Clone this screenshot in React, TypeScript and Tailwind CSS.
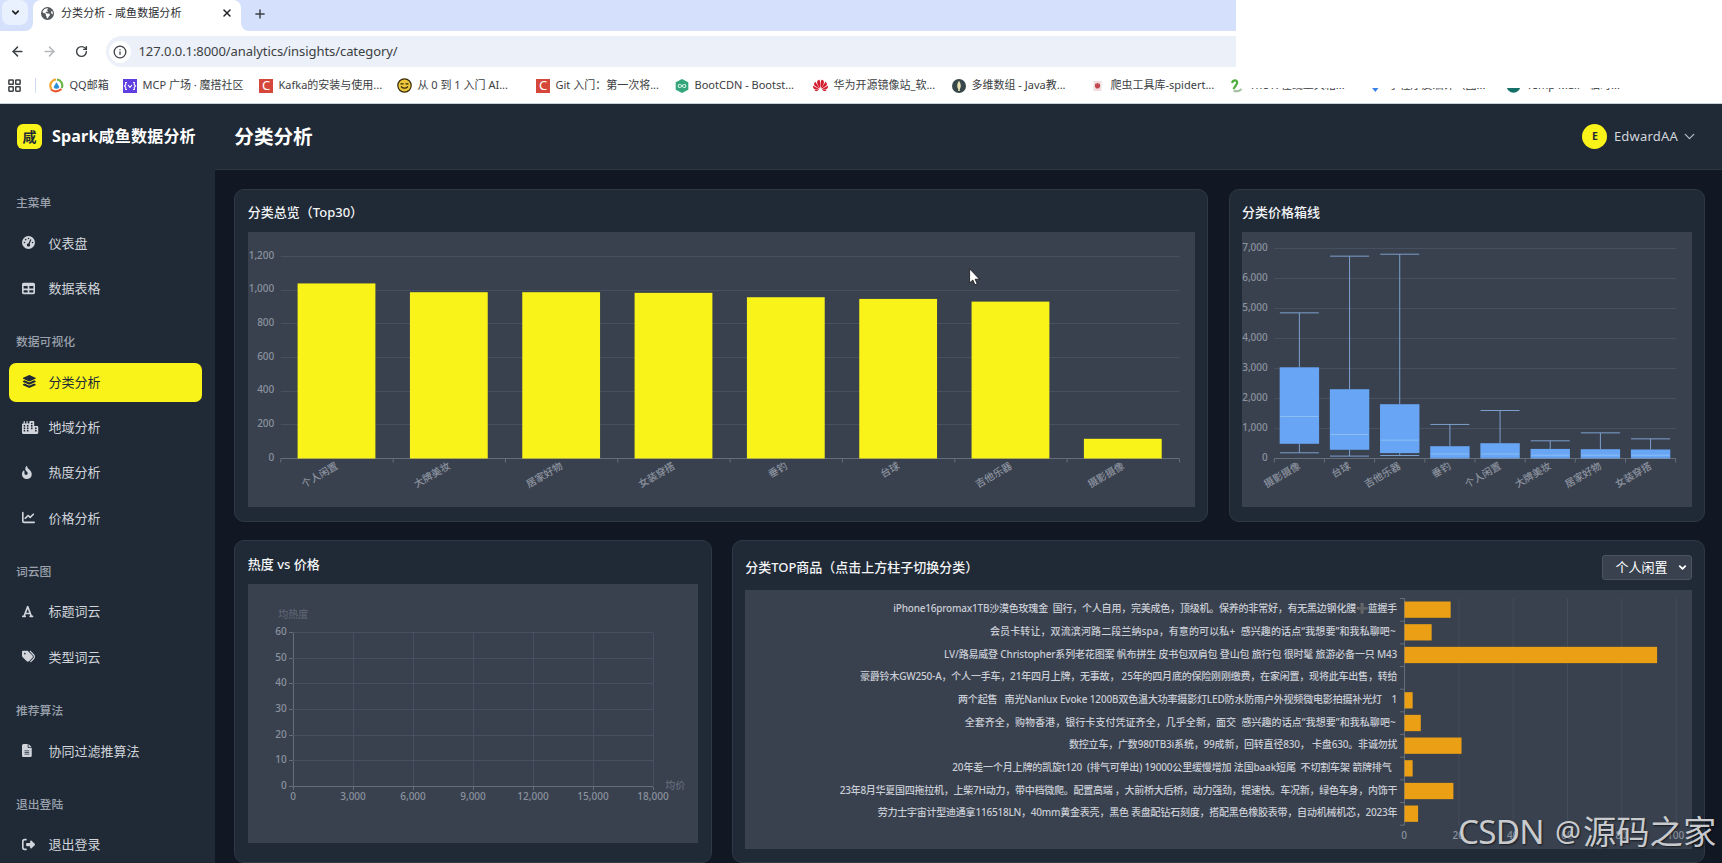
import type { ReactNode } from "react"
import { ArrowLeft, ArrowRight, ChevronDown, Info, LayoutGrid, Plus, RotateCw, X } from "lucide-react"
import {
  FaChartLine,
  FaCity,
  FaEarthAmericas,
  FaFileLines,
  FaFireFlameCurved,
  FaFont,
  FaGaugeHigh,
  FaLayerGroup,
  FaRightFromBracket,
  FaTable,
  FaTags,
} from "react-icons/fa6"
import { SiHuawei } from "react-icons/si"

const AXIS = "#8b929e"
const GRID = "#475060"
const LINE = "#656d7b"

const sections = [
  {
    title: "主菜单",
    items: [
      { label: "仪表盘", icon: FaGaugeHigh },
      { label: "数据表格", icon: FaTable },
    ],
  },
  {
    title: "数据可视化",
    items: [
      { label: "分类分析", icon: FaLayerGroup, active: true },
      { label: "地域分析", icon: FaCity },
      { label: "热度分析", icon: FaFireFlameCurved },
      { label: "价格分析", icon: FaChartLine },
    ],
  },
  {
    title: "词云图",
    items: [
      { label: "标题词云", icon: FaFont },
      { label: "类型词云", icon: FaTags },
    ],
  },
  { title: "推荐算法", items: [{ label: "协同过滤推算法", icon: FaFileLines }] },
  { title: "退出登陆", items: [{ label: "退出登录", icon: FaRightFromBracket }] },
]

const overview = [
  { name: "个人闲置", value: 1040 },
  { name: "大牌美妆", value: 988 },
  { name: "居家好物", value: 988 },
  { name: "女装穿搭", value: 984 },
  { name: "垂钓", value: 958 },
  { name: "台球", value: 948 },
  { name: "吉他乐器", value: 932 },
  { name: "摄影摄像", value: 117 },
]

// [low, q1, median, q3, high]
const boxes = [
  { name: "摄影摄像", v: [190, 490, 1400, 3040, 4855] },
  { name: "台球", v: [80, 290, 800, 2310, 6745] },
  { name: "吉他乐器", v: [100, 180, 610, 1810, 6810] },
  { name: "垂钓", v: [10, 20, 150, 410, 1135] },
  { name: "个人闲置", v: [10, 20, 150, 510, 1600] },
  { name: "大牌美妆", v: [10, 20, 110, 320, 590] },
  { name: "居家好物", v: [10, 20, 110, 310, 855] },
  { name: "女装穿搭", v: [10, 20, 110, 300, 655] },
]

// from / to are the horizontal extent of each label inside the chart
const topItems = [
  { name: "iPhone16promax1TB沙漠色玫瑰金  国行，个人自用，完美成色，顶级机。保养的非常好，有无黑边钢化膜➕蓝握手", value: 17, from: 148.3, to: 652.3 },
  { name: "会员卡转让，双流滨河路二段兰纳spa，有意的可以私+  感兴趣的话点“我想要”和我私聊吧~", value: 10, from: 245, to: 650.7 },
  { name: "LV/路易威登 Christopher系列老花图案 帆布拼生 皮书包双肩包 登山包 旅行包 很时髦 旅游必备一只 M43", value: 93, from: 199, to: 652.3 },
  { name: "豪爵铃木GW250-A，个人一手车，21年四月上牌，无事故， 25年的四月底的保险刚刚缴费，在家闲置，现将此车出售，转给", value: 0, from: 115, to: 652.5 },
  { name: "两个起售   南光Nanlux Evoke 1200B双色温大功率摄影灯LED防水防雨户外视频微电影拍摄补光灯    1", value: 3, from: 213, to: 652.3 },
  { name: "全套齐全，购物香港，银行卡支付凭证齐全，几乎全新，面交  感兴趣的话点“我想要”和我私聊吧~", value: 6, from: 219.7, to: 650.7 },
  { name: "数控立车，广数980TB3i系统，99成新，回转直径830， 卡盘630。非诚勿扰", value: 21, from: 324, to: 652.5 },
  { name: "20年差一个月上牌的凯旋t120  (排气可单出) 19000公里缓慢增加 法国baak短尾  不切割车架 箭牌排气", value: 3, from: 207.3, to: 646.7 },
  { name: "23年8月华夏国四拖拉机，上柴7H动力，带中档微爬。配置高端 ，大前桥大后桥，动力强劲，提速快。车况新，绿色车身，内饰干", value: 18, from: 94.7, to: 652.5 },
  { name: "劳力士宇宙计型迪通拿116518LN，40mm黄金表壳，黑色 表盘配钻石刻度，搭配黑色橡胶表带，自动机械机芯，2023年", value: 5, from: 132.7, to: 652.5 },
]

function CIcon() {
  return <span className="flex size-[14px] items-center justify-center bg-[#d5473b] text-[13px] leading-none text-white">C</span>
}

const bookmarks: { label: string; icon: ReactNode }[] = [
  {
    label: "QQ邮箱",
    icon: (
      <svg className="size-[15px]" viewBox="0 0 15 15">
        <path d="M7 1.5A6 6 0 0 0 2.5 11" fill="none" stroke="#f2a52c" strokeWidth="2.2" />
        <path d="M8 1.5A6 6 0 0 1 12.7 10" fill="none" stroke="#67b447" strokeWidth="2.2" />
        <path d="M2 11.5Q7 15.5 12.5 11" fill="none" stroke="#e9552f" strokeWidth="2" />
        <path d="M7.5 4.2 10.4 9a3.2 3.2 0 0 1-5.8 0z" fill="#2b8fd6" />
      </svg>
    ),
  },
  {
    label: "MCP 广场 · 魔搭社区",
    icon: (
      <svg className="size-[14px]" viewBox="0 0 14 14">
        <rect width="14" height="14" fill="#5f3fe0" />
        <path d="M4 3.5H2.7v2.2L1.5 7l1.2 1.3v2.2H4M10 3.5h1.3v2.2L12.5 7l-1.2 1.3v2.2H10M5 6l2 2.4L9 6" fill="none" stroke="#fff" strokeWidth="1.1" />
      </svg>
    ),
  },
  { label: "Kafka的安装与使用...", icon: <CIcon /> },
  {
    label: "从 0 到 1 入门 AI...",
    icon: (
      <svg className="size-[15px]" viewBox="0 0 15 15">
        <circle cx="7.5" cy="7.5" r="6.7" fill="#ecc53a" stroke="#33290c" strokeWidth="1.2" />
        <path d="M3.5 5.8h3M8.5 5.8h3M4 8.5q3.5 3.4 7 0" fill="none" stroke="#33290c" strokeWidth="1.2" />
      </svg>
    ),
  },
  { label: "Git 入门：第一次将...", icon: <CIcon /> },
  {
    label: "BootCDN - Bootst...",
    icon: (
      <svg className="size-[14px]" viewBox="0 0 14 14">
        <path d="M7 0l6.3 3.3v7.4L7 14 .7 10.7V3.3z" fill="#35a57c" />
        <path d="M7 7C5.6 5 3.2 5.2 3.2 7S5.6 9 7 7s3.8-1.8 3.8 0S8.4 9 7 7" fill="none" stroke="#d6f1e6" strokeWidth="1.1" />
      </svg>
    ),
  },
  { label: "华为开源镜像站_软...", icon: <SiHuawei className="size-[15px] text-[#d21c2f]" /> },
  {
    label: "多维数组 - Java教...",
    icon: (
      <svg className="size-[14px]" viewBox="0 0 14 14">
        <circle cx="7" cy="7" r="7" fill="#38474a" />
        <path d="M7 1.8Q10.2 6.5 7.8 10.3V12H6.2v-1.7Q3.8 6.5 7 1.8z" fill="#e9e3b4" />
      </svg>
    ),
  },
  {
    label: "爬虫工具库-spidert...",
    icon: (
      <svg className="size-[14px]" viewBox="0 0 14 14">
        <rect x="2.5" y="2" width="8" height="10" fill="#f1dfe0" />
        <path d="M4 4.5l1.5 1V4h2v1.5l1.5-1V8L7.5 9.5h-2L4 8z" fill="#c2464d" />
      </svg>
    ),
  },
  {
    label: "The X 在线工具箱...",
    icon: (
      <svg className="size-[14px]" viewBox="0 0 14 14">
        <path d="M2 4Q3 1 6 1.5 8.5 3 5.5 7L3.5 10" fill="none" stroke="#4fae3c" strokeWidth="2.2" />
        <path d="M3.5 11.5Q8 13.5 11.5 10" fill="none" stroke="#a9c2a6" strokeWidth="2.4" />
      </svg>
    ),
  },
  {
    label: "小程序反编译（图...",
    icon: (
      <svg className="size-[14px]" viewBox="0 0 14 14">
        <path d="M1 6.5h10.5L6.3 13z" fill="#3b82e8" />
      </svg>
    ),
  },
  {
    label: "Temp Mail - 临时...",
    icon: (
      <svg className="size-[14px]" viewBox="0 0 14 14">
        <circle cx="6.5" cy="7" r="6.8" fill="#15706a" />
      </svg>
    ),
  },
]

function Browser() {
  return (
    <div className="relative h-[104px] border-b border-[#c6d3d8] bg-white text-[#3c4043]">
      <div className="flex h-[31px] w-[1236px]">
        <div className="w-[33px] rounded-br-lg bg-[#d5e1fc] pl-[2px]">
          <div className="flex h-[25px] w-[26px] items-center justify-center rounded-lg bg-[#e9f1fe]">
            <ChevronDown className="size-[11px] text-[#202124]" strokeWidth={3.5} />
          </div>
        </div>
        <div className="w-[208px] bg-linear-to-b from-[#d5e1fc] from-50% to-white to-50%">
          <div className="flex h-[31px] items-center rounded-t-lg bg-white pb-[5px] pl-2">
            <FaEarthAmericas className="size-[13px] text-[#55585c]" />
            <span className="ml-[7px] w-[160px] text-[11px] tracking-[0.1px] whitespace-nowrap text-[#2b2d30]">分类分析 - 咸鱼数据分析</span>
            <X className="size-[12px] text-[#202124]" strokeWidth={3} />
          </div>
        </div>
        <div className="flex-1 rounded-bl-lg bg-[#d5e1fc] pt-[6.5px] pl-[12px]">
          <Plus className="size-[14px] text-[#3c4043]" strokeWidth={2.5} />
        </div>
      </div>
      <div className="flex h-[41px] w-[1236px] items-center pl-[9.5px]">
        <ArrowLeft className="size-[15px] text-[#3c4043]" strokeWidth={2.4} />
        <ArrowRight className="ml-[17px] size-[15px] text-[#b4b6b9]" strokeWidth={2.4} />
        <RotateCw className="ml-[18.5px] size-[13px] text-[#3c4043]" strokeWidth={2.6} />
        <div className="ml-[18px] flex h-[31px] flex-1 items-center rounded-l-full bg-[#ebf0f9] pl-[3px]">
          <span className="flex size-[22px] items-center justify-center rounded-full bg-white">
            <Info className="size-[14px]" strokeWidth={2.2} />
          </span>
          <span className="ml-[7.5px] text-[13px] tracking-[-0.07px]">127.0.0.1:8000/analytics/insights/category/</span>
        </div>
      </div>
      <div className="flex h-[27px] items-center">
        <LayoutGrid className="ml-[7px] size-[15px]" strokeWidth={2.4} />
        <span className="mx-[13px] h-[15px] w-px bg-[#cfdcf7]" />
        <div className="grid grid-cols-[74px_136px_138px_139px_139px_138px_139px_139px_139px_139px_138px_auto]">
          {bookmarks.map((b) => (
            <span key={b.label} className="flex items-center gap-[5.5px] text-[11px] whitespace-nowrap">
              {b.icon}
              {b.label}
            </span>
          ))}
        </div>
      </div>
      <div className="absolute top-0 left-[1246px] h-[88px] w-[476px] bg-white" />
    </div>
  )
}

function Sidebar() {
  return (
    <aside className="h-[759px] w-[215px] shrink-0 overflow-hidden bg-[#202a36] pl-[9px]">
      <div className="flex h-[64px] items-center pl-[8px]">
        <span className="flex size-[25px] items-center justify-center rounded-[6px] bg-[#faf31a] text-[14px] font-bold text-[#202a36]">咸</span>
        <span className="ml-[10px] text-[16px] font-bold tracking-[0.2px] whitespace-nowrap text-white">Spark咸鱼数据分析</span>
      </div>
      <nav className="pt-[0.8px]">
        {sections.map((s) => (
          <div key={s.title} className="flex flex-col gap-[6.6px] pt-[24.4px]">
            <div className="h-[24.2px] pl-[7px] text-[11.8px] leading-[18px] font-medium text-[#9aa1ad]">{s.title}</div>
            {s.items.map((it) => (
              <div
                key={it.label}
                className={
                  "flex h-[38.7px] w-[193px] items-center rounded-[7px] pl-[13px] text-[13px] " +
                  ("active" in it ? "bg-[#faf31a] text-[#202a36]" : "text-[#d1d5db]")
                }
              >
                <span className="w-[26.5px] pb-px">
                  <it.icon className="h-[13px] w-[16.5px]" preserveAspectRatio="xMinYMid" />
                </span>
                {it.label}
              </div>
            ))}
          </div>
        ))}
      </nav>
    </aside>
  )
}

function TopBar() {
  return (
    <header className="flex h-[66px] items-center justify-between border-b border-[#2b3642] bg-[#202a36] pr-[24px] pl-[19.3px]">
      <h1 className="text-[19.6px] font-bold text-white">分类分析</h1>
      <div className="flex items-center">
        <span className="flex size-[25px] items-center justify-center rounded-full bg-[#faf31a] text-[10.5px] font-bold text-[#202a36]">E</span>
        <span className="ml-[6.5px] text-[13px] tracking-[0.2px] text-[#d1d5db]">EdwardAA</span>
        <ChevronDown className="ml-[3px] size-[17px] text-[#b6bcc5]" strokeWidth={1.8} />
      </div>
    </header>
  )
}

function Card({ children }: { children: ReactNode }) {
  return <section className="rounded-[10px] border border-[#2e3945] bg-[#202a36] px-[12.5px]">{children}</section>
}

function TiltedLabel({ x, y, children }: { x: number; y: number; children: ReactNode }) {
  return (
    <text x={x} y={y} dy="0.36em" textAnchor="end" fill={AXIS} transform={`rotate(-30 ${x} ${y})`}>
      {children}
    </text>
  )
}

function OverviewChart() {
  const x0 = 32.8
  const step = 112.33
  const zero = 226.5
  const scale = 202 / 1200
  return (
    <svg className="block h-[275px] w-[947px] bg-[#39414f] text-[10px]" viewBox="0 0 947 275">
      {[0, 200, 400, 600, 800, 1000, 1200].map((v) => (
        <g key={v}>
          <line x1={x0} x2={931.4} y1={Math.floor(zero - v * scale) + 0.5} y2={Math.floor(zero - v * scale) + 0.5} stroke={v ? GRID : LINE} />
          <text x={26.3} y={zero - v * scale + 2.2} textAnchor="end" fill={AXIS}>{v.toLocaleString("en-US")}</text>
        </g>
      ))}
      {overview.map((d, i) => (
        <g key={d.name}>
          <rect x={x0 + 16.8 + i * step} y={zero - d.value * scale} width={77.8} height={d.value * scale} fill="#faf31a" />
          <TiltedLabel x={x0 + (i + 0.5) * step} y={zero + 6.5}>{d.name}</TiltedLabel>
        </g>
      ))}
      {Array.from({ length: 9 }, (_, i) => (
        <line key={i} x1={x0 + i * step} x2={x0 + i * step} y1={zero} y2={zero + 4} stroke={LINE} />
      ))}
    </svg>
  )
}

function BoxChart() {
  const x0 = 32.3
  const step = 50.17
  const zero = 226.5
  const y = (v: number) => zero - v * 0.03
  return (
    <svg className="block h-[275px] w-[450px] bg-[#39414f] text-[10px]" viewBox="0 0 450 275">
      {[0, 1000, 2000, 3000, 4000, 5000, 6000, 7000].map((v) => (
        <g key={v}>
          <line x1={x0} x2={433.7} y1={y(v)} y2={y(v)} stroke={v ? GRID : LINE} />
          <text x={25.8} y={y(v) + 2.2} textAnchor="end" fill={AXIS}>{v.toLocaleString("en-US")}</text>
        </g>
      ))}
      {Array.from({ length: 9 }, (_, i) => (
        <line key={i} x1={x0 + i * step} x2={x0 + i * step} y1={zero} y2={zero + 4} stroke={LINE} />
      ))}
      {boxes.map((b, i) => {
        const c = x0 + (i + 0.5) * step
        const [low, q1, mid, q3, high] = b.v
        return (
          <g key={b.name}>
            <path
              d={`M${c - 19.5} ${y(high)}h39M${c} ${y(high)}V${y(q3)}M${c} ${y(q1)}V${y(low)}M${c - 19.5} ${y(low)}h39`}
              fill="none"
              stroke="#7d9fcd"
            />
            <rect x={c - 19.7} y={y(q3)} width={39.4} height={y(q1) - y(q3)} fill="#68a6f5" />
            <line x1={c - 19} x2={c + 19} y1={y(mid)} y2={y(mid)} stroke="#8abef5" />
            <TiltedLabel x={c} y={zero + 6.5}>{b.name}</TiltedLabel>
          </g>
        )
      })}
    </svg>
  )
}

function ScatterChart() {
  return (
    <svg className="block h-[259px] w-[450px] bg-[#39414f] text-[10px]" viewBox="0 0 450 259">
      {[0, 1, 2, 3, 4, 5, 6].map((n) => {
        const y = Math.floor(202.5 - n * 25.67) + 0.5
        const x = 45.5 + n * 60
        return (
          <g key={n}>
            <line x1={45} x2={405} y1={y} y2={y} stroke={n ? GRID : LINE} />
            <line x1={41} x2={45} y1={y} y2={y} stroke={LINE} />
            <text x={38.7} y={y + 2.6} textAnchor="end" fill={AXIS}>{n * 10}</text>
            <line x1={x} x2={x} y1={49} y2={202} stroke={n ? GRID : LINE} />
            <line x1={x} x2={x} y1={203} y2={206} stroke={LINE} />
            <text x={x - 0.5} y={215.8} textAnchor="middle" fill={AXIS}>{(n * 3000).toLocaleString("en-US")}</text>
          </g>
        )
      })}
      <text x={45.3} y={34.3} textAnchor="middle" fill="#5b6371">均热度</text>
      <text x={417.3} y={205} fill="#636b79">均价</text>
    </svg>
  )
}

function TopChart() {
  const x0 = 659.5
  const top = 8.5
  const step = 22.67
  return (
    <svg className="block h-[259px] w-[947px] bg-[#39414f] text-[10px]" viewBox="0 0 947 259">
      {[0, 1, 2, 3, 4, 5].map((n) => {
        const x = x0 + n * 54.33
        return (
          <g key={n}>
            <line x1={x} x2={x} y1={top} y2={235} stroke={n ? "#454d5c" : LINE} />
            <text x={x - 0.5} y={248.7} textAnchor="middle" fill={AXIS}>{n * 20}</text>
          </g>
        )
      })}
      {Array.from({ length: 11 }, (_, i) => (
        <line key={i} x1={x0 - 4.5} x2={x0} y1={top + i * step} y2={top + i * step} stroke={LINE} />
      ))}
      {topItems.map((d, i) => {
        const [head, tail] = d.name.split("➕")
        return (
          <g key={d.name}>
            <text
              x={d.from}
              y={top + (i + 0.5) * step + 2.4}
              textLength={d.to - d.from}
              fill="#c9cdd5"
              className="whitespace-pre"
            >
              {head}
              {tail && <tspan className="font-['DejaVu_Sans']" fill="#b4b8bf" stroke="#262d38" strokeWidth="1.2">➕</tspan>}
              {tail}
            </text>
            <rect x={x0} y={top + i * step + 3} width={d.value * 2.716} height={16.3} fill="#eb9f14" />
          </g>
        )
      })}
    </svg>
  )
}

export default function App() {
  return (
    <div className="relative h-[863px] w-[1722px] overflow-hidden bg-[#111824] font-['Noto_Sans','Noto_Sans_CJK_SC',sans-serif]">
      <Browser />
      <div className="flex">
        <Sidebar />
        <div className="flex-1">
          <TopBar />
          <main className="flex flex-col gap-[18.5px] pt-[19.3px] pl-[19.3px] text-[13px] font-medium text-[#f3f4f6]">
            <div className="grid h-[332.5px] grid-cols-[973.5px_476.5px] gap-[20.8px]">
              <Card>
                <h2 className="h-[42px] pt-[12px] leading-[20px]">分类总览（Top30）</h2>
                <OverviewChart />
              </Card>
              <Card>
                <h2 className="h-[42px] pt-[12px] leading-[20px]">分类价格箱线</h2>
                <BoxChart />
              </Card>
            </div>
            <div className="grid h-[322.5px] grid-cols-[477.5px_973.7px] gap-[19.9px]">
              <Card>
                <h2 className="h-[42.5px] pt-[12.5px] leading-[20px]">热度 vs 价格</h2>
                <ScatterChart />
              </Card>
              <Card>
                <div className="flex h-[49px] items-center justify-between pt-[4px]">
                  <h2>分类TOP商品（点击上方柱子切换分类）</h2>
                  <button className="flex h-[25px] w-[90px] items-center justify-between rounded-[3px] border border-[#4a5361] bg-[#39414f] pr-[3px] pl-[12.5px] font-normal text-white">
                    个人闲置
                    <ChevronDown className="size-[11px]" strokeWidth={4} />
                  </button>
                </div>
                <TopChart />
              </Card>
            </div>
          </main>
        </div>
      </div>
      <svg className="absolute top-[268px] left-[969px] h-[18px] w-[12px]" viewBox="0 0 12 18">
        <path d="M.6.8v14.2l3.2-3 2.2 4.8 2.2-1-2.1-4.6h4.4z" fill="#fff" stroke="#111" strokeWidth=".8" />
      </svg>
      <div className="absolute top-[807px] left-[1458px] flex text-[33.3px] leading-[48px] whitespace-nowrap text-[#c8cacd] [text-shadow:1px_1px_2px_#0009]">
        <span className="w-[97px] tracking-[-0.8px]">CSDN</span>
        <span className="w-[28px] text-[29px]">@</span>
        <span>源码之家</span>
      </div>
    </div>
  )
}
